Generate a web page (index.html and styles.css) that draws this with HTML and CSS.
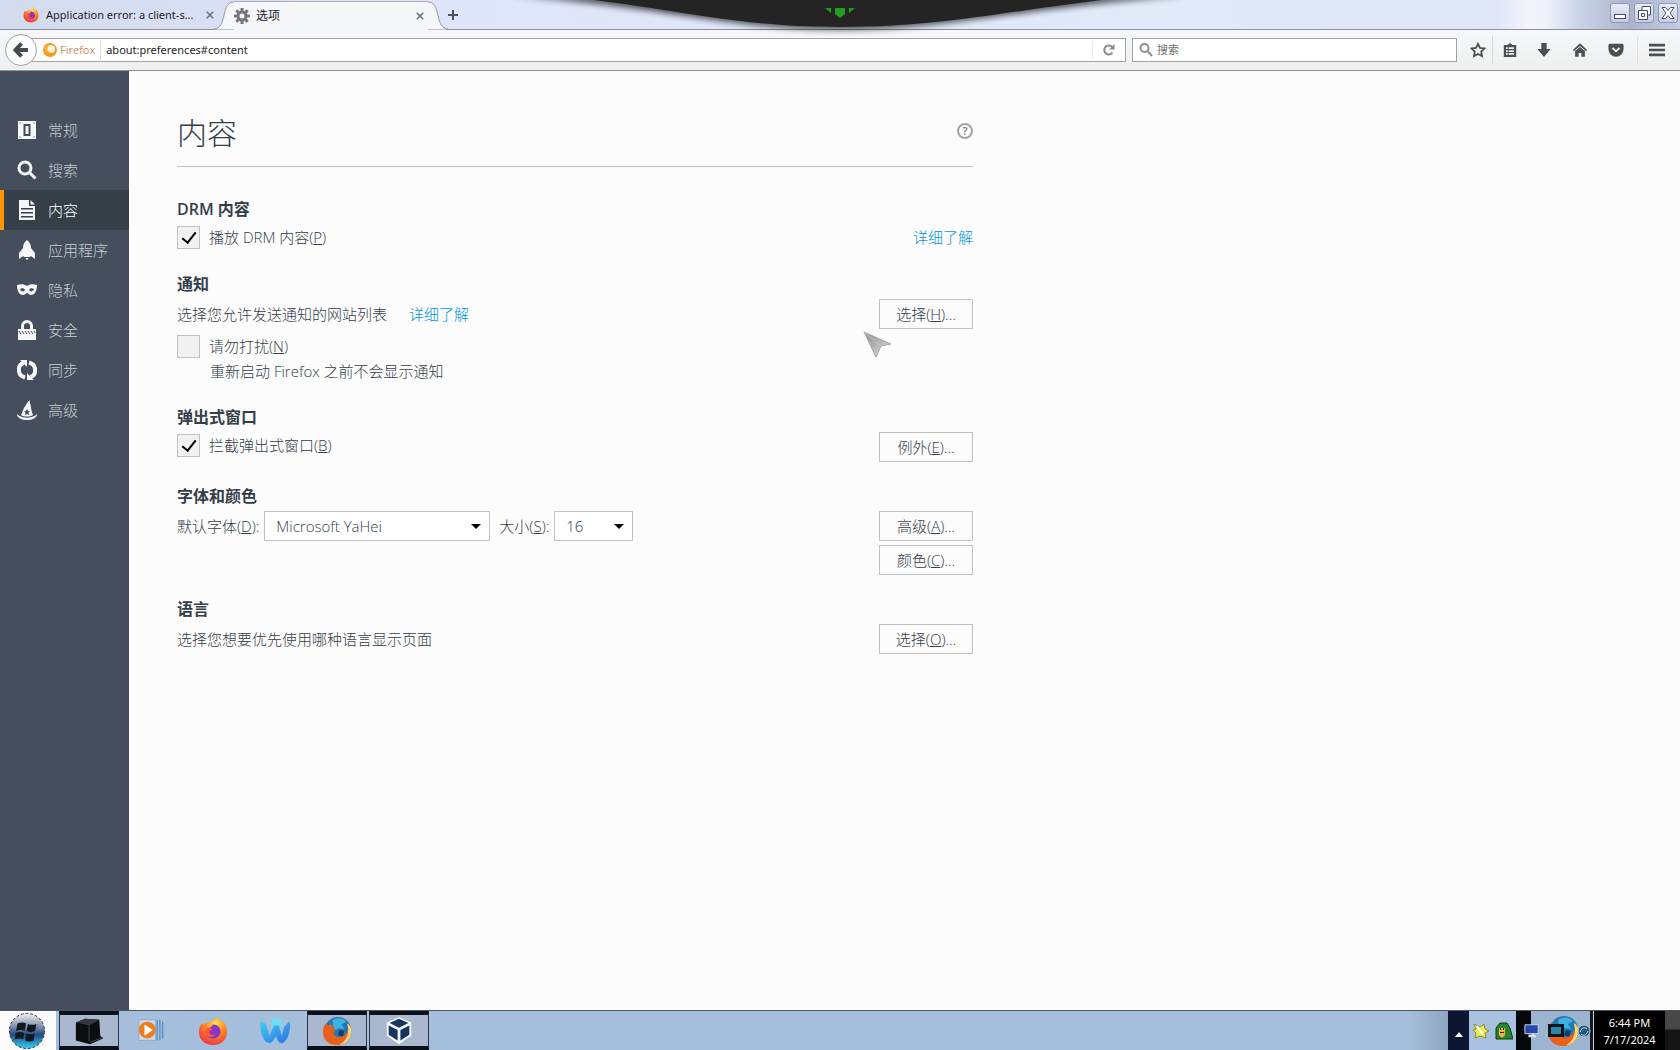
FILE: index.html
```html
<!DOCTYPE html>
<html lang="zh-CN">
<head>
	<meta charset="utf-8">
	<title>选项</title>
	<link rel="stylesheet" href="styles.css">
</head>
<body>
	<svg class="defs" width="0" height="0">
		<defs>
			<radialGradient id="ffbody" cx="60%" cy="25%" r="80%">
				<stop offset="0" stop-color="#ffe14a"/><stop offset="0.45" stop-color="#ff8a1e"/><stop offset="1" stop-color="#f0304a"/>
			</radialGradient>
			<linearGradient id="orb" x1="0" y1="0" x2="0" y2="1">
				<stop offset="0" stop-color="#eef2f6"/><stop offset="0.35" stop-color="#8596ad"/><stop offset="0.6" stop-color="#244a86"/><stop offset="1" stop-color="#35d3f2"/>
			</linearGradient>
			<linearGradient id="wave" x1="0" y1="0" x2="1" y2="1">
				<stop offset="0" stop-color="#3fd0f2"/><stop offset="1" stop-color="#2f6fe0"/>
			</linearGradient>
			<linearGradient id="arrow" x1="0" y1="0" x2="1" y2="1">
				<stop offset="0" stop-color="#8d8d8d"/><stop offset="1" stop-color="#e0e0e0"/>
			</linearGradient>
			<filter id="soft" x="-10%" y="-60%" width="120%" height="260%"><feGaussianBlur stdDeviation="3"/></filter>
			<symbol id="fx-new" viewBox="0 0 32 32">
				<path d="M16 31C7 31 1 24.500 1 17c0-4 1.500-7 3.500-9.500l.8 3C6.500 8.500 8 7.500 10 7c4-1 6-1 8.500-3.500C19.500 2.500 20 1 20 0c2 2 3.500 4 4 7 1.500-.5 2-1.500 2-3 3 4 5 8 5 13 0 8-6.500 14-15 14z" fill="url(#ffbody)"/>
				<path d="M16 9c5 0 8 3.500 8 7.500S20.500 24 16 24s-8-3-8-7.500c0-1.500.5-3 1.500-4 2 .8 4 .2 6.500-3.500z" fill="#8a35c9"/>
				<path d="M9 13c3-.5 5 .5 7 0-1 2-4 2-4 4 0 3 4 4 6.500 2.500C17 24 8 23 8 17c0-1.500.3-3 1-4z" fill="#ff5a2f"/>
			</symbol>
			<symbol id="fx-old" viewBox="0 0 32 32">
				<circle cx="17" cy="15" r="14" fill="#2078b5"/>
				<path d="M11 5c4-4 12-3 15 1l-5 3 3 5-6-1-5 3z" fill="#3fb1dc"/>
				<path d="M19 15l5 1-2 6-5-2z" fill="#123a66"/>
				<path d="M31 13c1 10-6 18-15 18S1 25 1 17c0-5 2-8 4-10l1 3c2-1 4-1 6 0-1 1-1 2 0 3l3 1c0 2-3 2-3 4 1 4 5 5 9 4 4-2 6-4 7-8l-1-6c2 1 3 3 4 5z" fill="#e8601c"/>
				<path d="M31 13c1 10-5 17-12 17 6-3 9-9 9-16l-1-6c2 1 3 3 4 5z" fill="#ffd76a"/>
			</symbol>
		</defs>
	</svg>

	<!-- 标签栏 -->
	<header class="tabbar">
		<div class="tab">
			<svg class="favicon" viewBox="0 0 32 32"><use href="#fx-new"/></svg>
			<span class="tab-text">Application error: a client-s...</span>
			<button class="tab-close" aria-label="关闭"><svg viewBox="0 0 10 10"><path d="M1 1l8 8M9 1l-8 8"/></svg></button>
		</div>
		<div class="tab-active">
			<svg class="curve" viewBox="0 0 20 29"><path class="fill" d="M0 29C6 28 8 24 10 15S14 1 20 1v28z"/><path class="line" d="M0 28.500C6 28 8 24 10 15S14 1.500 20 1.500"/></svg>
			<div class="tab-body">
				<svg class="gear" viewBox="0 0 16 16"><circle cx="8" cy="8" r="4"/><path d="M8 0v3M8 13v3M0 8h3M13 8h3M2.300 2.300l2.200 2.200M11.500 11.500l2.200 2.200M2.300 13.700l2.200-2.200M11.500 4.500l2.200-2.200"/></svg>
				<span class="tab-text">选项</span>
				<button class="tab-close" aria-label="关闭"><svg viewBox="0 0 10 10"><path d="M1 1l8 8M9 1l-8 8"/></svg></button>
			</div>
			<svg class="curve" viewBox="0 0 20 29"><path class="fill" d="M20 29C14 28 12 24 10 15S6 1 0 1v28z"/><path class="line" d="M20 28.500C14 28 12 24 10 15S6 1.500 0 1.500"/></svg>
		</div>
		<button class="tab-new" aria-label="新标签页"><svg viewBox="0 0 10 10"><path d="M5 0v10M0 5h10"/></svg></button>
		<div class="winbtns">
			<button aria-label="最小化"><svg viewBox="0 0 18 18"><rect x="3.500" y="10.500" width="11" height="4"/></svg></button>
			<button aria-label="还原"><svg viewBox="0 0 18 18"><path d="M7 2.500h8.500v8.500h-3v4.500H3.500V6.500H7z"/><path d="M6.500 9.500h3v3h-3zM7 6.500h5.500V11"/></svg></button>
			<button aria-label="关闭窗口"><svg viewBox="0 0 18 18"><path d="M3 3.500h3.500L9 6.500l2.500-3H15l-4 5.500 4 5.500h-3.500L9 11.500l-2.500 3H3L7 9z"/></svg></button>
		</div>
	</header>

	<!-- 工具栏 -->
	<div class="toolbar">
		<button class="back" aria-label="后退"><svg viewBox="0 0 16 16"><path d="M8.500 1.500L2.500 8l6 6.500M3 8h12"/></svg></button>
		<div class="urlbar">
			<svg class="brand" viewBox="0 0 16 16"><circle cx="8" cy="8" r="7" fill="#f39a1f"/><circle cx="9" cy="7" r="4" fill="#fdf3dc"/><path d="M2 3c2 0 3 1 4 2l-1 3 4 3-6-1z" fill="#f7b13c"/></svg>
			<label class="identity" for="url">Firefox</label>
			<input id="url" type="text" value="about:preferences#content">
			<button class="reload" aria-label="刷新"><svg viewBox="0 0 14 14"><path d="M10.500 9.500A4.500 4.500 0 1 1 10 3.800"/><path class="tip" d="M12.500 1v5.500H7z"/></svg></button>
		</div>
		<div class="searchbar">
			<svg viewBox="0 0 14 14"><circle cx="5.500" cy="5" r="4"/><path d="M8.500 8l4.500 5"/></svg>
			<input type="text" placeholder="搜索" aria-label="搜索">
		</div>
		<nav class="tools">
			<button aria-label="书签"><svg viewBox="0 0 18 18"><path class="stroke" d="M9 2l2.200 4.600 5 .7-3.600 3.500.9 5L9 13.400l-4.500 2.400.9-5L1.800 7.300l5-.7z"/></svg></button>
			<button class="split" aria-label="书签菜单"><svg viewBox="0 0 18 18"><path d="M6 3.500L9 1l3 2.500h4V17H2V3.500z"/><path class="hole" d="M4.500 6h2v2h-2zM7.500 6h6v2h-6zM4.500 9.200h2v2h-2zM7.500 9.200h6v2h-6zM4.500 12.400h2v2h-2zM7.500 12.400h6v2h-6z"/></svg></button>
			<button aria-label="下载"><svg viewBox="0 0 18 18"><path d="M6 1h6v7h4.500L9 17 1.500 8H6z"/></svg></button>
			<button aria-label="主页"><svg viewBox="0 0 18 18"><path d="M9 1.500l8 7.500-1 1.500L9 4.500l-7 6L1 9z"/><path d="M3.500 10L9 5.500l5.500 4.500v6.500h-4v-4h-3v4h-4z"/></svg></button>
			<button aria-label="Pocket"><svg viewBox="0 0 18 18"><path d="M2 2h14q1.500 0 1.500 2v4a8.500 8.500 0 0 1-17 0V4q0-2 1.500-2z"/><path class="check" d="M5 6.500l4 4 4-4"/></svg></button>
			<button class="menu" aria-label="菜单"><svg viewBox="0 0 18 18"><path d="M0 2h18v3H0zM0 7.500h18v3H0zM0 13h18v3H0z"/></svg></button>
		</nav>
	</div>

	<div class="page">
		<ul class="side">
			<li><a href="#general"><svg viewBox="0 0 20 20"><path fill-rule="evenodd" d="M1 1h18v18H1zM6.500 4v12h7V4zM8.500 6h3v8h-3zM2.500 2.500v1h1v-1zM16.500 2.500v1h1v-1zM2.500 16.500v1h1v-1zM16.500 16.500v1h1v-1z"/></svg>常规</a></li>
			<li><a href="#search"><svg viewBox="0 0 20 20"><circle class="ln" cx="8" cy="8" r="6"/><path class="ln" d="M12.500 12.500l6 6"/></svg>搜索</a></li>
			<li class="current"><a href="#content"><svg viewBox="0 0 20 20"><path fill-rule="evenodd" d="M2 0h10v6h6v14H2zM4 8v1.500h12V8zM4 12v1.500h12V12zM4 16v1.500h12V16z"/><path d="M13.500 0L18 4.500h-4.500z"/></svg>内容</a></li>
			<li><a href="#applications"><svg viewBox="0 0 20 20"><path d="M10 0c3 2 4 5 4 8l4 5v6l-4-3-1 1H7l-1-1-4 3v-6l4-5c0-3 1-6 4-8z"/><path d="M8.500 18h3L10 20.500z"/></svg>应用程序</a></li>
			<li><a href="#privacy"><svg viewBox="0 0 20 20"><path fill-rule="evenodd" d="M0 5c4-1 7-1 10 1 3-2 6-2 10-1 0 7-3 10-6 10-2 0-3-2-4-2s-2 2-4 2c-3 0-6-3-6-10zM3 9c1 3 4 3 5 1-1-2-3-2-5-1zM17 9c-1 3-4 3-5 1 1-2 3-2 5-1z"/></svg>隐私</a></li>
			<li><a href="#security"><svg viewBox="0 0 20 20"><path class="ln" d="M5.500 10V6a4.500 4.500 0 0 1 9 0v4"/><path d="M1 9h18v11H1z"/><path class="dark" d="M2 11l2 3M5 11l2 3M8 11l2 3M11 11l2 3M14 11l2 3M17 11l1 2"/></svg>安全</a></li>
			<li><a href="#sync"><svg viewBox="0 0 20 20"><path class="ring" d="M8 17.500C-.5 15 .5 5 6.500 3M12 2.500c8.500 2.500 7.500 12.500 1.500 14.500"/><path d="M3 0h7v7zM17 20h-7v-7z"/></svg>同步</a></li>
			<li><a href="#advanced"><svg viewBox="0 0 20 20"><path fill-rule="evenodd" d="M4 15c2-3 2-7 5-10 1-2 2-4 4-5-1 3 1 4 1 7 0 3 1 5 2 8-3 2-9 2-12 0zM10 9l-1 2H7l1.500 1.500L8 15l2-1 2 1-.5-2.500L13 11h-2z"/><path d="M0 14c5 5 15 5 20 0 0 8-20 8-20 0z"/></svg>高级</a></li>
		</ul>

		<main class="main">
			<div class="title">
				<h1>内容</h1>
				<button class="help" aria-label="帮助">?</button>
			</div>

			<section>
				<h2>DRM 内容</h2>
				<div class="row">
					<label class="check"><input type="checkbox" checked><span>播放 DRM 内容(<u>P</u>)</span></label>
					<a class="more" href="#">详细了解</a>
				</div>
			</section>

			<section>
				<h2>通知</h2>
				<div class="row">
					<p>选择您允许发送通知的网站列表<a class="more after" href="#">详细了解</a></p>
					<button class="btn">选择(<u>H</u>)...</button>
				</div>
				<div class="row">
					<label class="check"><input type="checkbox"><span>请勿打扰(<u>N</u>)</span></label>
				</div>
				<p class="tip-text">重新启动 Firefox 之前不会显示通知</p>
			</section>

			<section>
				<h2>弹出式窗口</h2>
				<div class="row">
					<label class="check"><input type="checkbox" checked><span>拦截弹出式窗口(<u>B</u>)</span></label>
					<button class="btn">例外(<u>E</u>)...</button>
				</div>
			</section>

			<section>
				<h2>字体和颜色</h2>
				<div class="row">
					<div class="fonts">
						<label for="font">默认字体(<u>D</u>):</label>
						<select id="font" class="font"><option>Microsoft YaHei</option></select>
						<label for="size">大小(<u>S</u>):</label>
						<select id="size" class="size"><option>16</option></select>
					</div>
					<div class="btns">
						<button class="btn">高级(<u>A</u>)...</button>
						<button class="btn">颜色(<u>C</u>)...</button>
					</div>
				</div>
			</section>

			<section>
				<h2>语言</h2>
				<div class="row">
					<p>选择您想要优先使用哪种语言显示页面</p>
					<button class="btn">选择(<u>O</u>)...</button>
				</div>
			</section>
		</main>
	</div>

	<!-- 任务栏 -->
	<footer class="taskbar">
		<button class="start" aria-label="开始">
			<svg viewBox="0 0 40 40"><circle cx="20" cy="20" r="18.500" fill="url(#orb)" stroke="#222a36" stroke-dasharray="3 2"/><path d="M10 12q5-2 9 0l-1.500 8q-4-2-9 0zM21 12.500q4 2 9 0L28.500 20q-5 2-9 0zM8 22q5-2 9 0l-1 7q-4-2-9 0zM19 22.500q4 2 9 0L27 30q-5 2-9 0z" fill="#14181f"/></svg>
		</button>
		<button class="task on" aria-label="终端"><svg viewBox="0 0 32 32"><path d="M2 7l10-4 15 1 1 17 3 3-14 6L2 26z" fill="#0c0d0f"/><path d="M2 7l10-4 15 1-11 6z" fill="#33363b"/><path d="M16 10v17M17 28l14-5" stroke="#4a4e55" fill="none"/></svg></button>
		<button class="task" aria-label="播放器"><svg viewBox="0 0 32 32"><path d="M3 4h18v22H3z" fill="#c9dcec" stroke="#8fa9c2"/><path d="M22.500 4v22M25.500 4v22M28.500 6v18" stroke="#2f7fc4"/><circle cx="12" cy="15" r="9" fill="#ee7d1c"/><path d="M9 9l9 6-9 6z" fill="#fff"/></svg></button>
		<button class="task" aria-label="Firefox"><svg viewBox="0 0 32 32"><use href="#fx-new"/></svg></button>
		<button class="task" aria-label="Waterfox"><svg viewBox="0 0 32 32"><circle cx="18" cy="8" r="6" fill="#6fdcf0"/><path d="M0 6c5 0 7 2 8 8l2 7 5-11h5l3 11c2-4 1-11 9-15 1 11-3 22-9 23-3 0-5-4-6-8-2 4-4 8-7 8C3 28 0 17 0 6z" fill="url(#wave)"/></svg></button>
		<button class="task on" aria-label="Firefox 窗口"><svg viewBox="0 0 32 32"><use href="#fx-old"/></svg></button>
		<button class="task on" aria-label="VirtualBox"><svg viewBox="0 0 32 32"><path d="M16 1l13 6v14l-13 9-13-9V7z" fill="#f2f6fa"/><path d="M16 3l10 4.500-10 5-10-5zM5 10l9.500 5v11L5 20zM27 10l-9.500 5v11L27 20z" fill="#17345c"/></svg></button>
		<div class="tray">
			<button class="tray-up" aria-label="显示隐藏的图标"><svg viewBox="0 0 10 6"><path d="M5 0l5 6H0z" fill="#fff"/></svg></button>
			<div class="tray-a">
				<svg viewBox="0 0 18 18"><path d="M2 2l6 3 4-3 1 5 4 2-4 2 1 5-6-2-5 2 1-5-3-3 3-1z" fill="#eef04a" stroke="#8a8a30"/><path d="M5 4l6 9" stroke="#fff" stroke-width="2"/></svg>
				<svg viewBox="0 0 18 18"><path d="M5 1h7l3 5 3 11H1V6z" fill="#26842c" stroke="#0c3a10"/><path d="M4 6h6v7l-3 3-3-3z" fill="#f0b830"/><path d="M5 6h1v2H5zM8 6h1v2H8zM5 10h4v1H5z" fill="#301a08"/></svg>
			</div>
			<div class="tray-gap"></div>
			<div class="tray-b">
				<svg class="mon" viewBox="0 0 18 18"><path d="M1 2h15v10H1z" fill="#2848a8" stroke="#d9e2f2"/><path d="M5 13h7l2 3H5z" fill="#dbe2ea"/></svg>
				<svg class="fx" viewBox="0 0 32 32"><use href="#fx-old"/><path d="M1 9h16v13H1z" fill="#10161c"/><path d="M4 12h10v7H4z" fill="#2d86a8"/></svg>
				<svg class="sync" viewBox="0 0 14 18"><circle cx="7" cy="9" r="6" fill="#27587e" stroke="#a9c9dc"/><path d="M3 10c2-5 5-5 7-3M11 9c-2 5-5 5-7 3" stroke="#d4ecf7" fill="none"/></svg>
			</div>
			<div class="clock"><span>6:44 PM</span><span>7/17/2024</span></div>
			<button class="desktop" aria-label="显示桌面"></button>
		</div>
	</footer>

	<!-- 全屏时顶部的下拉条 -->
	<svg class="notch" viewBox="0 0 680 40">
		<path d="M0 -4C150 6 220 30 330 30S520 6 680 -4z" fill="#000" opacity="0.65" filter="url(#soft)"/>
		<path d="M75 -1C170 10 230 27 330 27S490 12 600 -1z" fill="#242424"/>
		<path d="M325 8h10v6l-5 4-5-4zM315 8h6v5zM345 8h-6v5z" fill="#1d9e1d"/>
	</svg>
	<svg class="pointer" viewBox="0 0 30 28"><path d="M1 1l27 12-10 2-5 11z" fill="url(#arrow)" stroke="#a8a8a8"/><path d="M1 1l17 14" stroke="#c4c4c4"/></svg>
</body>
</html>
```
FILE: styles.css
```css
*{
	box-sizing: border-box;
}
body{
	margin: 0;
	height: 100vh;
	display: flex;
	flex-direction: column;
	overflow: hidden;
	background: #fcfcfc;
	color: #333e48;
	font-family: "Open Sans","Noto Sans CJK SC",sans-serif;
	font-size: 15px;
	font-weight: 300;
	line-height: 20px;
}
button{
	margin: 0;
	padding: 0;
	border: 0;
	background: none;
	font: inherit;
	color: inherit;
}
input,select{
	font: inherit;
	color: inherit;
}
h1,h2,p,ul{
	margin: 0;
	padding: 0;
}
a{
	text-decoration: none;
}
.defs{
	position: absolute;
}

/* 标签栏 */
.tabbar{
	height: 30px;
	flex: none;
	display: flex;
	background: linear-gradient(90deg, #d3dbef 0, #dfe5fa 30%, #e0eaf8 70%, #dfe6f7 89%, #f3f5fd 91%, #f0f2fb 92%, #c9d3e8 94%, #aab4ca 97%, #c2cbe2 100%);
	border-bottom: 1px solid #8c9099;
	font-size: 12px;
	font-weight: 400;
	color: #1c1c2c;
}
.tab{
	width: 214px;
	display: flex;
	align-items: center;
	padding-left: 23px;
}
.favicon{
	width: 16px;
	height: 16px;
	margin-right: 7px;
}
.tab-text{
	flex: 1;
	white-space: nowrap;
	font-family: "Noto Sans","Noto Sans CJK SC",sans-serif;
	font-size: 11px;
}
.tab-close{
	width: 8px;
	display: flex;
}
.tab-close svg{
	width: 8px;
	height: 8px;
	stroke: #6d7078;
	stroke-width: 2;
}
.tab-active{
	display: flex;
	height: 30px;
}
.curve{
	width: 20px;
	height: 30px;
}
.curve .fill{
	fill: #f5f6f8;
}
.curve .line{
	fill: none;
	stroke: #9297a3;
}
.tab-body{
	width: 194px;
	display: flex;
	align-items: center;
	background: #f5f6f8;
	border-top: 1px solid #a9adb8;
	margin-top: 1px;
}
.tab-body .tab-text{
	font-size: 12px;
}
.tab-body .tab-close{
	margin-right: 4px;
}
.gear{
	width: 16px;
	height: 16px;
	margin-right: 6px;
	fill: none;
	stroke: #74777c;
	stroke-width: 3;
}
.tab-new{
	width: 10px;
	display: flex;
	align-items: center;
}
.tab-new svg{
	width: 10px;
	height: 10px;
	stroke: #4c525e;
	stroke-width: 2;
}
.winbtns{
	margin-left: auto;
	display: flex;
	gap: 4px;
	padding: 3px 2px 6px 0;
}
.winbtns button{
	width: 20px;
	height: 20px;
	border: 1px solid #8e97b8;
	border-radius: 3px;
	background: linear-gradient(#e8ebf7, #c6cde2);
}
.winbtns svg{
	display: block;
	width: 18px;
	height: 18px;
	fill: #fff;
	stroke: #474c6c;
}

/* 工具栏 */
.toolbar{
	height: 41px;
	flex: none;
	display: flex;
	align-items: center;
	background: linear-gradient(#f5f7fa, #efefef);
	border-bottom: 1px solid #949494;
	padding: 0 12px 0 5px;
	font-size: 12px;
	font-weight: 400;
}
.back{
	width: 32px;
	height: 32px;
	flex: none;
	border: 1px solid #9fa1a5;
	border-radius: 16px;
	background: #fbfcfd;
	display: flex;
	align-items: center;
	justify-content: center;
	z-index: 1;
}
.back svg{
	width: 16px;
	height: 16px;
	fill: none;
	stroke: #454a50;
	stroke-width: 4;
}
.urlbar{
	flex: 1;
	height: 24px;
	display: flex;
	align-items: center;
	margin-left: -6px;
	padding-left: 10px;
	border: 1px solid #a0a2a6;
	background: #fff;
}
.brand{
	width: 16px;
	height: 16px;
	margin-right: 2px;
}
.identity{
	padding-right: 5px;
	margin-right: 5px;
	border-right: 1px solid #e4dcd4;
	color: #c4905c;
	font-size: 11px;
}
.urlbar input,.searchbar input{
	flex: 1;
	min-width: 0;
	height: 20px;
	padding: 0;
	border: 0;
	background: none;
	color: #1b1b1b;
	font-size: 11px;
	outline: none;
}
.urlbar input{
	font-family: "Noto Sans",sans-serif;
}
.reload{
	width: 33px;
	height: 18px;
	border-left: 1px solid #e8e8e8;
	display: flex;
	align-items: center;
	justify-content: center;
}
.reload svg{
	width: 14px;
	height: 14px;
	fill: none;
	stroke: #8a8a8a;
	stroke-width: 2;
}
.reload .tip{
	fill: #8a8a8a;
	stroke: none;
}
.searchbar{
	width: 325px;
	height: 24px;
	display: flex;
	align-items: center;
	gap: 4px;
	margin-left: 6px;
	padding-left: 6px;
	border: 1px solid #a0a2a6;
	background: #fff;
}
.searchbar svg{
	width: 14px;
	height: 14px;
	fill: none;
	stroke: #8f8f8f;
	stroke-width: 2;
}
.searchbar input::placeholder{
	color: #6f6f6f;
}
.tools{
	display: flex;
	align-items: center;
	margin-left: 6px;
}
.tools button{
	width: 36px;
	height: 28px;
	display: flex;
	align-items: center;
	justify-content: center;
}
.tools button:first-child{
	width: 29px;
}
.tools .split{
	width: 34px;
	border-left: 1px solid #d6d8dc;
}
.tools .menu{
	width: 39px;
	border-left: 1px solid #dedede;
	margin-left: 3px;
	margin-right: -8px;
}
.tools svg{
	width: 16px;
	height: 16px;
	fill: #4c5054;
}
.tools .stroke{
	fill: none;
	stroke: #4c5054;
	stroke-width: 2;
}
.tools .hole{
	fill: #f2f3f4;
}
.tools .check{
	fill: none;
	stroke: #f2f3f4;
	stroke-width: 2;
}

/* 左侧导航 */
.page{
	flex: 1;
	min-height: 0;
	display: flex;
}
.side{
	width: 129px;
	flex: none;
	padding-top: 39px;
	background: #444e5c;
	list-style: none;
}
.side a{
	height: 40px;
	display: flex;
	align-items: center;
	gap: 11px;
	padding-left: 13px;
	border-left: 4px solid transparent;
	color: #c9ced3;
}
.side .current a{
	background: #343f48;
	border-left-color: #ff9500;
	color: #fff;
}
.side svg{
	width: 20px;
	height: 20px;
	fill: #f4f6f8;
}
.side .ln,.side .ring{
	fill: none;
	stroke: #f4f6f8;
	stroke-width: 3;
}
.side .ring{
	stroke-width: 4;
}
.side .dark{
	stroke: #444e5c;
}

/* 内容 */
.main{
	flex: 1;
	max-width: 844px;
	padding: 40px 0 0 48px;
}
.title{
	display: flex;
	align-items: center;
	height: 56px;
	padding-bottom: 16px;
	margin-bottom: 30px;
	border-bottom: 1px solid #c1c1c1;
}
.title h1{
	flex: 1;
	padding-top: 4px;
	font-size: 30px;
	line-height: 40px;
	font-weight: 300;
}
.help{
	width: 16px;
	height: 16px;
	border: 2px solid #a3a3a3;
	border-radius: 8px;
	color: #777;
	font-size: 11px;
	font-weight: 600;
	line-height: 12px;
}
section{
	margin-bottom: 22px;
}
h2{
	font-size: 16px;
	font-weight: 600;
	line-height: 24px;
	margin-bottom: 3px;
}
.row{
	display: flex;
	justify-content: space-between;
	align-items: flex-start;
	margin-bottom: 4px;
}
.row:last-of-type{
	margin-bottom: 0;
}
.row p{
	line-height: 30px;
}
.check{
	height: 26px;
	display: flex;
	align-items: center;
	gap: 9px;
}
.check input{
	appearance: none;
	width: 23px;
	height: 23px;
	margin: 0;
	border: 1px solid #c1c1c1;
	background: #f1f1f1;
	display: flex;
	align-items: center;
	justify-content: center;
}
.check input:checked::before{
	content: "";
	width: 6px;
	height: 12px;
	border: solid #000;
	border-width: 0 2px 2px 0;
	transform: rotate(38deg);
	margin-bottom: 3px;
}
.more{
	color: #0095dd;
	line-height: 26px;
}
.after{
	margin-left: 22px;
}
.tip-text{
	padding-left: 33px;
	line-height: 24px;
}
.btn{
	width: 94px;
	height: 30px;
	border: 1px solid #c1c1c1;
	background: #fbfbfb;
}
.btns{
	display: flex;
	flex-direction: column;
	gap: 4px;
}
.fonts{
	display: flex;
	align-items: center;
	gap: 5px;
}
.fonts select{
	appearance: none;
	height: 30px;
	padding: 0 11px;
	border: 1px solid #c1c1c1;
	border-radius: 0;
	background: #fff url("data:image/svg+xml,%3Csvg xmlns='http://www.w3.org/2000/svg' width='10' height='5'%3E%3Cpath d='M0 0h10L5 5z'/%3E%3C/svg%3E") no-repeat right 8px center;
}
.fonts .font{
	width: 226px;
	margin-right: 4px;
}
.fonts .size{
	width: 79px;
}

/* 任务栏 */
.taskbar{
	height: 40px;
	flex: none;
	display: flex;
	background: #a5bedb;
	border-top: 1px solid #4b5563;
}
.start{
	width: 56px;
	background: #fbfbfb;
}
.start svg{
	display: block;
	width: 38px;
	height: 38px;
	margin-left: 8px;
}
.task{
	width: 60px;
	margin-right: 2px;
	display: flex;
	align-items: center;
	justify-content: center;
}
.task svg{
	width: 30px;
	height: 30px;
}
.start + .task{
	margin-left: 3px;
}
.task.on{
	border: 1px solid #2a3342;
	border-width: 4px 1px;
	border-top-color: #0a0f1a;
	border-bottom-color: #0a0f1a;
	background: #a9b7cf;
}
.tray{
	margin-left: auto;
	display: flex;
	padding-left: 40px;
	background: linear-gradient(90deg, #a5bedb, #8ea6c0 40px);
}
.tray-up{
	width: 21px;
	background: #0d1630;
}
.tray-up svg{
	width: 8px;
	height: 5px;
}
.tray-a{
	width: 47px;
	display: flex;
	align-items: center;
	justify-content: space-around;
	background: #a9c1e0;
}
.tray svg{
	flex: none;
}
.tray-a svg{
	width: 18px;
	height: 18px;
}
.tray-gap{
	width: 15px;
	background: #06080c;
}
.tray-b{
	width: 62px;
	display: flex;
	align-items: center;
	background: #9db4d0;
	border-right: 3px solid #10151c;
}
.mon{
	width: 16px;
	height: 18px;
	margin-left: -7px;
}
.fx{
	width: 32px;
	height: 32px;
	margin-left: 7px;
}
.sync{
	width: 14px;
	height: 18px;
	margin-left: -2px;
}
.clock{
	width: 72px;
	display: flex;
	flex-direction: column;
	align-items: center;
	justify-content: center;
	background: #000;
	border-left: 1px solid #d5d8dc;
	color: #fff;
	font-family: "Noto Sans",sans-serif;
	font-size: 11px;
	font-weight: 400;
	line-height: 17px;
}
.desktop{
	width: 15px;
	background: linear-gradient(#484848 45%, #141414 50%);
}

/* 浮在页面上的部分 */
.notch{
	position: absolute;
	top: 0;
	left: 50%;
	width: 680px;
	height: 40px;
	margin-left: -330px;
	overflow: hidden;
	pointer-events: none;
}
.pointer{
	position: absolute;
	left: 863px;
	top: 331px;
	width: 30px;
	height: 28px;
	fill: none;
}
```
